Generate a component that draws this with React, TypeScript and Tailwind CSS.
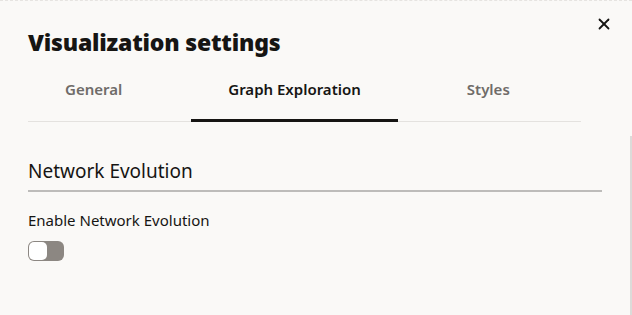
import { X } from 'lucide-react';

const tabs = [
  { name: 'General', active: false },
  { name: 'Graph Exploration', active: true },
  { name: 'Styles', active: false },
];

export default function App() {
  return (
    <div
      className="relative h-[315px] w-full overflow-hidden bg-[#faf9f7] text-[#161513] flex flex-col"
      style={{ fontFamily: '"Noto Sans", "Open Sans", sans-serif' }}
    >
      {/* faint dotted edge of the page behind */}
      <div className="h-px border-t border-dashed border-[#e6e4e1]" />

      <button type="button" className="absolute right-[17px] top-[13px] p-0.5 text-[#161513]">
        <X className="h-[18px] w-[18px]" strokeWidth={2.4} />
      </button>

      {/* Header */}
      <div className="px-7 pt-[25px]">
        <h1 className="text-[23px] font-black leading-[32px] tracking-[-0.2px]">Visualization settings</h1>
      </div>

      {/* Tabs */}
      <div className="ml-7 mr-[51px] mt-[13px] flex gap-8 border-b border-[#e4e2df]">
        {tabs.map((tab) => (
          <div
            key={tab.name}
            className={`px-[37px] pb-[20px] pt-[8px] text-[15px] font-semibold leading-[20px] border-b-[3px] -mb-px ${
              tab.active ? 'border-[#161513] text-[#161513]' : 'border-transparent text-[#6f6c69]'
            }`}
          >
            {tab.name}
          </div>
        ))}
      </div>

      {/* Body with scrollbar */}
      <div className="flex flex-1 pt-[14px]">
        <div className="flex-1 pl-7 pr-[28px]">
          <div className="pt-[22px] border-b-2 border-[#bdbcba] pb-[6px]">
            <h2 className="text-[19px] font-normal leading-[26px] text-[#161513]">Network Evolution</h2>
          </div>
          <div className="mt-[18px] text-[15px] leading-[20px] text-[#161513]">Enable Network Evolution</div>
          <button
            type="button"
            className="mt-[11px] flex h-[20px] w-[36px] items-center rounded-[6px] bg-[#8c8782] p-px"
          >
            <span className="h-[18px] w-[18px] rounded-[5px] bg-white" />
          </button>
        </div>
        <div className="w-[2px] self-stretch bg-[#dcdbd9]" />
      </div>
    </div>
  );
}
